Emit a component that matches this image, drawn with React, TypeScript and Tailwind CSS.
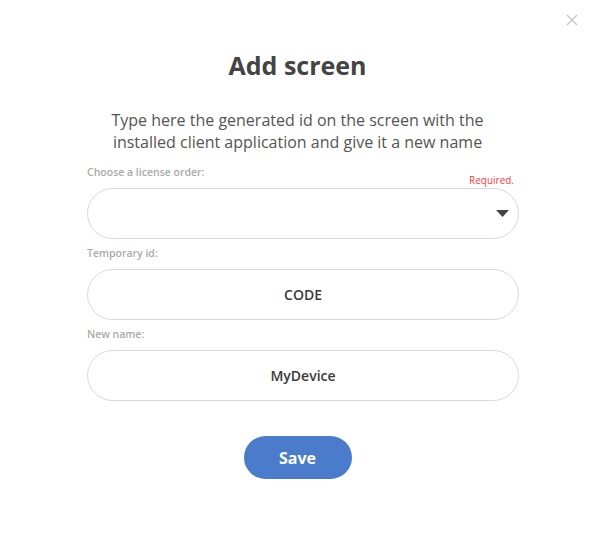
import { useState } from "react"

const Field = ({ label, value, onChange }: { label: string; value: string; onChange: (v: string) => void }) => (
  <div className="flex flex-col">
    <label className="text-[10.5px] leading-[16px] font-[600] text-[#aaaaaa] mb-[8px]">{label}</label>
    <input
      value={value}
      onChange={(e) => onChange(e.target.value)}
      className="h-[51px] w-full rounded-full border border-[#d9d9d9] bg-white text-center text-[14px] font-[600] text-[#3a3a3a] outline-none"
    />
  </div>
)

const App = () => {
  const [order, setOrder] = useState("")
  const [code, setCode] = useState("CODE")
  const [name, setName] = useState("MyDevice")

  return (
    <div className="font-['Open_Sans',sans-serif] w-[595px] h-[541px] bg-white relative">
      <button className="absolute right-[17px] top-[14px] text-[#c4c4c4]">
        <svg width="12" height="12" viewBox="0 0 12 12" stroke="currentColor" strokeWidth="1.2">
          <path d="M1 1L11 11M11 1L1 11" />
        </svg>
      </button>

      <div className="flex flex-col pt-[48px]">
        <h1 className="text-center text-[25px] leading-[34px] font-[700] text-[#444444]">Add screen</h1>

        <p className="mt-[27px] px-[100px] text-center text-[16px] leading-[22px] text-[#555555]">
          Type here the generated id on the screen with the installed client application and give it a new name
        </p>

        <div className="ml-[87px] w-[432px] flex flex-col">
          <div className="mt-[11px] flex flex-col relative">
            <label className="text-[10.5px] leading-[16px] font-[600] text-[#aaaaaa] mb-[8px]">Choose a license order:</label>
            <span className="absolute right-[5px] top-[9px] text-[10px] leading-[14px] text-[#ff3b3b]">Required.</span>
            <div className="relative">
              <select
                value={order}
                onChange={(e) => setOrder(e.target.value)}
                className="appearance-none h-[51px] w-full rounded-full border border-[#d9d9d9] bg-white px-6 text-[15px] text-[#3a3a3a] outline-none"
              >
                <option value=""></option>
              </select>
              <svg className="absolute right-[10px] top-1/2 -translate-y-1/2" width="13" height="8" viewBox="0 0 13 8">
                <path d="M0 0H13L6.5 7Z" fill="#444444" />
              </svg>
            </div>
          </div>

          <div className="mt-[6px]">
            <Field label="Temporary id:" value={code} onChange={setCode} />
          </div>
          <div className="mt-[6px]">
            <Field label="New name:" value={name} onChange={setName} />
          </div>
        </div>

        <div className="mt-[35px] flex justify-center">
          <button className="h-[43px] w-[108px] rounded-full bg-[#4a7ccb] text-[16px] font-[700] text-white">Save</button>
        </div>
      </div>
    </div>
  )
}

export default App
